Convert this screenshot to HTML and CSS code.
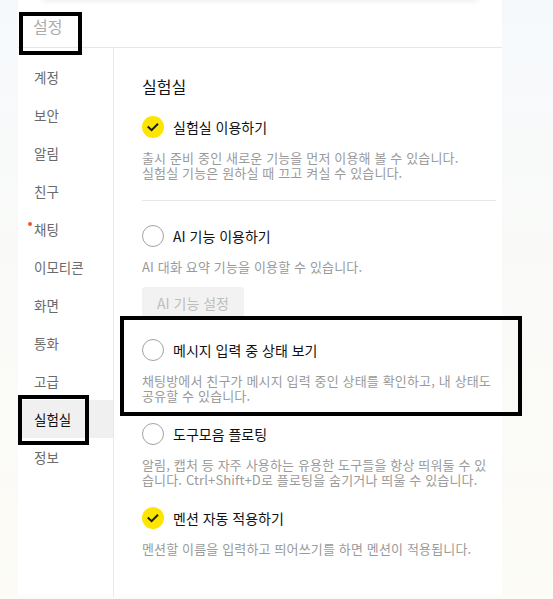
FILE: index.html
```html
<!DOCTYPE html>
<html lang="ko">
<head>
<meta charset="utf-8">
<title>설정</title>
<link rel="stylesheet" href="styles.css">
</head>
<body>
<div class="window">
  <div class="topshadow"></div>
  <header class="header">설정</header>
  <div class="body">
    <nav class="sidebar">
      <div class="nav-item">계정</div>
      <div class="nav-item">보안</div>
      <div class="nav-item">알림</div>
      <div class="nav-item">친구</div>
      <div class="nav-item has-dot">채팅</div>
      <div class="nav-item">이모티콘</div>
      <div class="nav-item">화면</div>
      <div class="nav-item">통화</div>
      <div class="nav-item">고급</div>
      <div class="nav-item active">실험실</div>
      <div class="nav-item">정보</div>
    </nav>
    <main class="content">
      <h1 class="title">실험실</h1>

      <section class="option">
        <div class="option-row">
          <span class="check on"><svg viewBox="0 0 22 22" width="22" height="22"><path d="M6.5 11.2 L9.6 14.2 L15.3 8.4" fill="none" stroke="#1b1b1b" stroke-width="2" stroke-linecap="square"/></svg></span>
          <span class="label">실험실 이용하기</span>
        </div>
        <p class="desc">출시 준비 중인 새로운 기능을 먼저 이용해 볼 수 있습니다.<br>실험실 기능은 원하실 때 끄고 켜실 수 있습니다.</p>
      </section>

      <hr class="divider">

      <section class="option">
        <div class="option-row">
          <span class="check"></span>
          <span class="label">AI 기능 이용하기</span>
        </div>
        <p class="desc">AI 대화 요약 기능을 이용할 수 있습니다.</p>
        <button class="btn" disabled>AI 기능 설정</button>
      </section>

      <section class="option">
        <div class="option-row">
          <span class="check"></span>
          <span class="label">메시지 입력 중 상태 보기</span>
        </div>
        <p class="desc">채팅방에서 친구가 메시지 입력 중인 상태를 확인하고, 내 상태도 공유할 수 있습니다.</p>
      </section>

      <section class="option">
        <div class="option-row">
          <span class="check"></span>
          <span class="label">도구모음 플로팅</span>
        </div>
        <p class="desc">알림, 캡처 등 자주 사용하는 유용한 도구들을 항상 띄워둘 수 있습니다. Ctrl+Shift+D로 플로팅을 숨기거나 띄울 수 있습니다.</p>
      </section>

      <section class="option">
        <div class="option-row">
          <span class="check on"><svg viewBox="0 0 22 22" width="22" height="22"><path d="M6.5 11.2 L9.6 14.2 L15.3 8.4" fill="none" stroke="#1b1b1b" stroke-width="2" stroke-linecap="square"/></svg></span>
          <span class="label">멘션 자동 적용하기</span>
        </div>
        <p class="desc">멘션할 이름을 입력하고 띄어쓰기를 하면 멘션이 적용됩니다.</p>
      </section>
    </main>
  </div>
</div>

<div class="mark mark-header"></div>
<div class="mark mark-nav"></div>
<div class="mark mark-option"></div>
</body>
</html>
```

FILE: styles.css
```css
* { box-sizing: border-box; }

html, body {
  margin: 0;
  padding: 0;
  height: 100%;
}

body {
  width: 553px;
  height: 599px;
  overflow: hidden;
  position: relative;
  background: linear-gradient(to bottom, #f6f9fc 0%, #f9faf8 40%, #fcfbf5 100%);
  font-family: "Noto Sans CJK KR", "Noto Sans", sans-serif;
  color: #1a1a1a;
}

.window {
  position: relative;
  margin-left: 18px;
  width: 484px;
  height: 597px;
  background: #ffffff;
  display: flex;
  flex-direction: column;
}

.topshadow {
  position: absolute;
  top: -6px;
  left: 24px;
  right: 24px;
  height: 6px;
  box-shadow: 0 1px 5px rgba(0, 0, 0, 0.08);
  background: #fff;
}

.header {
  height: 48px;
  border-bottom: 1px solid #e6e6e6;
  padding: 15px 0 0 15px;
  font-size: 16px;
  line-height: 22px;
  color: #ababab;
}

.body {
  flex: 1;
  display: flex;
}

.sidebar {
  width: 96px;
  border-right: 1px solid #e8e8e8;
  padding-top: 10px;
}

.nav-item {
  position: relative;
  height: 38px;
  line-height: 38px;
  padding-left: 16px;
  font-size: 13.5px;
  color: #6a6a6a;
}

.nav-item.active {
  background: #f0f0f0;
  color: #111;
}

.nav-item.has-dot::before {
  content: "";
  position: absolute;
  left: 10px;
  top: 12px;
  width: 4px;
  height: 4px;
  border-radius: 50%;
  background: #f2562b;
}

.content {
  flex: 1;
  padding: 28px 6px 0 28px;
}

.title {
  margin: 0 0 20px;
  font-size: 16px;
  line-height: 20px;
  font-weight: normal;
  color: #111;
}

.option {
  margin-bottom: 20px;
}

.option-row {
  display: flex;
  align-items: center;
  gap: 9px;
  height: 22px;
}

.check {
  flex: none;
  width: 22px;
  height: 22px;
  border-radius: 50%;
  border: 1px solid #a3a3a3;
  display: block;
}

.check.on {
  border: none;
  background: #fee500;
}

.check svg { display: block; }

.label {
  font-size: 14px;
  line-height: 20px;
  color: #111;
}

.desc {
  margin: 12px 0 0;
  font-size: 13px;
  line-height: 15px;
  letter-spacing: 0.15px;
  color: #9a9a9a;
}

.divider {
  border: none;
  border-top: 1px solid #e6e6e6;
  margin: 4px 0 24px;
}

.btn {
  display: block;
  margin-top: 13px;
  height: 32px;
  padding: 0 15px;
  border: none;
  border-radius: 3px;
  background: #f2f2f2;
  color: #bdbdbd;
  font-family: inherit;
  font-size: 14px;
}

.mark {
  position: absolute;
  border: 4px solid #000;
  pointer-events: none;
}

.mark-header { left: 19px; top: 12px; width: 63px; height: 43px; }
.mark-nav { left: 18px; top: 395px; width: 71px; height: 50px; }
.mark-option { left: 120px; top: 316px; width: 402px; height: 100px; }
```
